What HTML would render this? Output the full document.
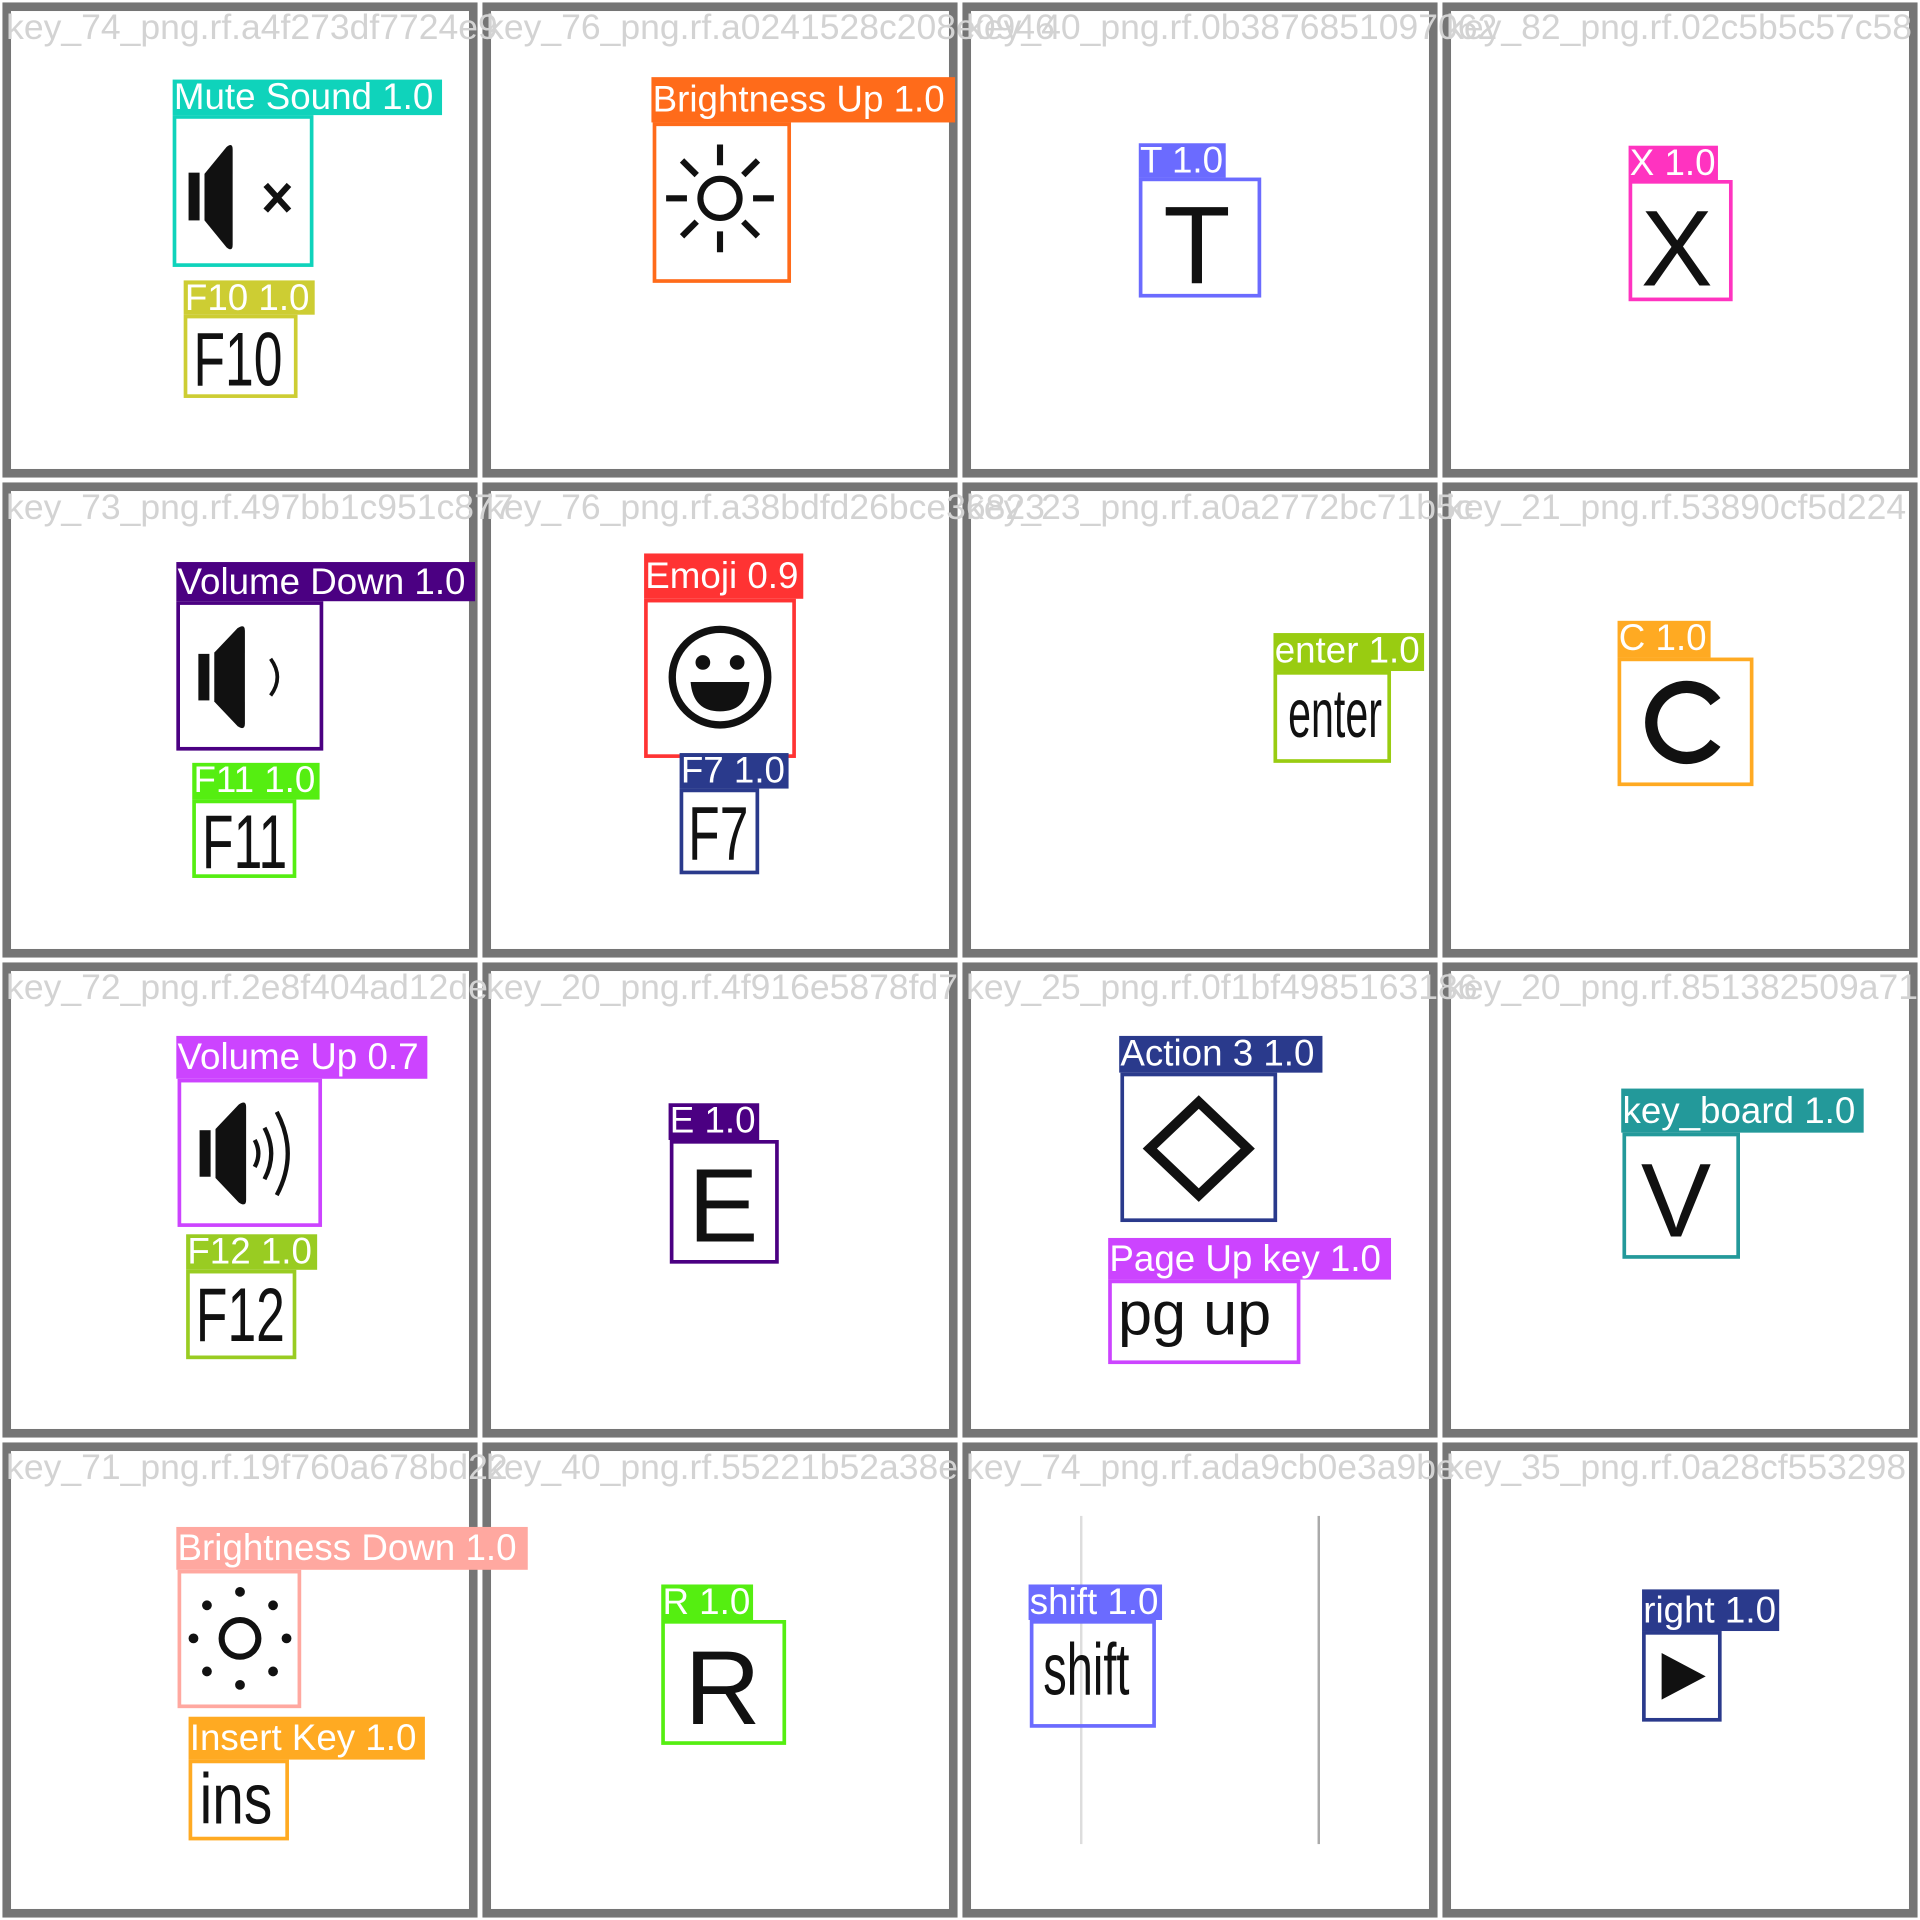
<!DOCTYPE html>
<html><head><meta charset="utf-8"><style>
html,body{margin:0;padding:0;background:#fff;width:1920px;height:1920px;overflow:hidden}
#w{position:absolute;left:0;top:0;width:1568px;height:1568px;transform:scale(1.22449);transform-origin:0 0;font-family:"Liberation Sans",sans-serif}
.c{position:absolute;width:374px;height:374px;border:7px solid #757575;box-sizing:content-box}
.fn{position:absolute;font-size:29px;color:#d3d3d3;white-space:nowrap;line-height:30px}
.l{position:absolute;color:#fff;font-size:30px;line-height:30px;white-space:nowrap;padding-left:1px;box-sizing:border-box;overflow:visible}
.b{position:absolute;box-sizing:border-box;border:3px solid}
.g{position:absolute;font-family:"Liberation Sans",sans-serif;color:#111}
svg{position:absolute;overflow:visible}
</style></head><body><div id="w">
<div class="c" style="left:2px;top:2px"></div><div class="c" style="left:394px;top:2px"></div><div class="c" style="left:786px;top:2px"></div><div class="c" style="left:1178px;top:2px"></div>
<div class="c" style="left:2px;top:394px"></div><div class="c" style="left:394px;top:394px"></div><div class="c" style="left:786px;top:394px"></div><div class="c" style="left:1178px;top:394px"></div>
<div class="c" style="left:2px;top:786px"></div><div class="c" style="left:394px;top:786px"></div><div class="c" style="left:786px;top:786px"></div><div class="c" style="left:1178px;top:786px"></div>
<div class="c" style="left:2px;top:1178px"></div><div class="c" style="left:394px;top:1178px"></div><div class="c" style="left:786px;top:1178px"></div><div class="c" style="left:1178px;top:1178px"></div>
<div class="fn" style="left:5px;top:8px">key_74_png.rf.a4f273df7724e9</div>
<div class="fn" style="left:397px;top:8px">key_76_png.rf.a0241528c208e0946</div>
<div class="fn" style="left:789px;top:8px">key_40_png.rf.0b3876851097062</div>
<div class="fn" style="left:1181px;top:8px">key_82_png.rf.02c5b5c57c58</div>
<div class="fn" style="left:5px;top:400px">key_73_png.rf.497bb1c951c877</div>
<div class="fn" style="left:397px;top:400px">key_76_png.rf.a38bdfd26bce36823</div>
<div class="fn" style="left:789px;top:400px">key_23_png.rf.a0a2772bc71b5c</div>
<div class="fn" style="left:1181px;top:400px">key_21_png.rf.53890cf5d224</div>
<div class="fn" style="left:5px;top:792px">key_72_png.rf.2e8f404ad12de</div>
<div class="fn" style="left:397px;top:792px">key_20_png.rf.4f916e5878fd7</div>
<div class="fn" style="left:789px;top:792px">key_25_png.rf.0f1bf4985163186</div>
<div class="fn" style="left:1181px;top:792px">key_20_png.rf.851382509a71</div>
<div class="fn" style="left:5px;top:1184px">key_71_png.rf.19f760a678bd22</div>
<div class="fn" style="left:397px;top:1184px">key_40_png.rf.55221b52a38e</div>
<div class="fn" style="left:789px;top:1184px">key_74_png.rf.ada9cb0e3a9be</div>
<div class="fn" style="left:1181px;top:1184px">key_35_png.rf.0a28cf553298</div>

<div class="l" style="left:141px;top:65px;width:220px;height:29px;background:#0fd3bb">Mute Sound 1.0</div>
<div class="b" style="left:141px;top:94px;width:115px;height:124px;border-color:#0fd3bb"></div>
<svg style="left:141px;top:94px" width="115" height="124"><rect x="13" y="47" width="9" height="39" fill="#111"/><path d="M26 48 L44 26 Q49 22 49 28 L49 106 Q49 112 44 108 L26 86 Z" fill="#111"/><path d="M76 57 L95 78 M95 57 L76 78" stroke="#111" stroke-width="5"/></svg>
<div class="l" style="left:150px;top:229px;width:107px;height:28px;background:#cdcd33">F10 1.0</div>
<div class="b" style="left:150px;top:257px;width:93px;height:68px;border-color:#cdcd33"></div>
<div class="g" style="left:158px;top:259px;font-size:62px;transform:scaleX(.68);transform-origin:0 0">F10</div>

<div class="l" style="left:532px;top:63px;width:248px;height:37px;background:#ff6b1a;line-height:37px">Brightness Up 1.0</div>
<div class="b" style="left:533px;top:100px;width:113px;height:131px;border-color:#ff6b1a"></div>
<svg style="left:533px;top:100px" width="113" height="131"><circle cx="55" cy="62" r="16" fill="none" stroke="#111" stroke-width="5"/><g stroke="#111" stroke-width="5"><path d="M55 18V35M55 89V106M11 62H28M82 62H99M24 31L36 43M74 81L86 93M86 31L74 43M36 81L24 93"/></g></svg>

<div class="l" style="left:930px;top:117px;width:71px;height:28px;background:#6b6bff">T 1.0</div>
<div class="b" style="left:930px;top:145px;width:100px;height:98px;border-color:#6b6bff"></div>
<div class="g" style="left:950px;top:150px;font-size:90px">T</div>

<div class="l" style="left:1330px;top:119px;width:73px;height:28px;background:#ff33c0">X 1.0</div>
<div class="b" style="left:1330px;top:147px;width:85px;height:99px;border-color:#ff33c0"></div>
<div class="g" style="left:1340px;top:152px;font-size:88px">X</div>

<div class="l" style="left:144px;top:459px;width:244px;height:32px;background:#4b0082;line-height:34px">Volume Down 1.0</div>
<div class="b" style="left:144px;top:491px;width:120px;height:122px;border-color:#4b0082"></div>
<svg style="left:144px;top:491px" width="120" height="122"><rect x="18" y="43" width="9" height="38" fill="#111"/><path d="M31 42 L50 22 Q56 18 56 24 L56 100 Q56 106 50 102 L31 82 Z" fill="#111"/><path d="M77 47 Q88 62 77 77" fill="none" stroke="#111" stroke-width="3"/></svg>
<div class="l" style="left:157px;top:623px;width:104px;height:30px;background:#55ee11">F11 1.0</div>
<div class="b" style="left:157px;top:653px;width:85px;height:64px;border-color:#55ee11"></div>
<div class="g" style="left:165px;top:653px;font-size:62px;transform:scaleX(.68);transform-origin:0 0">F11</div>

<div class="l" style="left:526px;top:452px;width:130px;height:37px;background:#ff3333;line-height:37px">Emoji 0.9</div>
<div class="b" style="left:526px;top:489px;width:124px;height:130px;border-color:#ff3333"></div>
<svg style="left:526px;top:489px" width="124" height="130"><circle cx="62" cy="64" r="39" fill="none" stroke="#111" stroke-width="6"/><circle cx="48" cy="52" r="6" fill="#111"/><circle cx="76" cy="52" r="6" fill="#111"/><path d="M38 68 H86 Q84 92 62 92 Q40 92 38 68Z" fill="#111"/></svg>
<div class="l" style="left:555px;top:615px;width:89px;height:29px;background:#2a3a8c">F7 1.0</div>
<div class="b" style="left:555px;top:644px;width:65px;height:70px;border-color:#2a3a8c"></div>
<div class="g" style="left:562px;top:646px;font-size:62px;transform:scaleX(.68);transform-origin:0 0">F7</div>

<div class="l" style="left:1040px;top:517px;width:123px;height:31px;background:#99cc11">enter 1.0</div>
<div class="b" style="left:1040px;top:548px;width:96px;height:75px;border-color:#99cc11"></div>
<div class="g" style="left:1052px;top:550px;font-size:56px;transform:scaleX(.6);transform-origin:0 0">enter</div>

<div class="l" style="left:1321px;top:507px;width:76px;height:30px;background:#ffaa22">C 1.0</div>
<div class="b" style="left:1321px;top:537px;width:111px;height:105px;border-color:#ffaa22"></div>
<svg style="left:1321px;top:537px" width="111" height="105"><path d="M80 36 A29 29 0 1 0 80 70" fill="none" stroke="#111" stroke-width="10"/></svg>

<div class="l" style="left:144px;top:846px;width:205px;height:35px;background:#cc44ff;line-height:36px">Volume Up 0.7</div>
<div class="b" style="left:145px;top:881px;width:118px;height:121px;border-color:#cc44ff"></div>
<svg style="left:145px;top:881px" width="118" height="121"><rect x="18" y="42" width="9" height="38" fill="#111"/><path d="M31 41 L50 21 Q56 17 56 23 L56 99 Q56 105 50 101 L31 81 Z" fill="#111"/><g fill="none" stroke="#111" stroke-width="3.5"><path d="M63 50 Q69 61 63 72"/><path d="M71 40 Q82 61 71 82"/><path d="M81 27 Q99 61 81 95"/></g></svg>
<div class="l" style="left:152px;top:1008px;width:107px;height:29px;background:#99cc22">F12 1.0</div>
<div class="b" style="left:152px;top:1037px;width:90px;height:73px;border-color:#99cc22"></div>
<div class="g" style="left:160px;top:1039px;font-size:62px;transform:scaleX(.68);transform-origin:0 0">F12</div>

<div class="l" style="left:546px;top:901px;width:74px;height:30px;background:#4b0082">E 1.0</div>
<div class="b" style="left:547px;top:931px;width:89px;height:101px;border-color:#4b0082"></div>
<div class="g" style="left:562px;top:936px;font-size:86px">E</div>

<div class="l" style="left:914px;top:846px;width:166px;height:30px;background:#2a3a8c">Action 3 1.0</div>
<div class="b" style="left:915px;top:876px;width:128px;height:122px;border-color:#2a3a8c"></div>
<svg style="left:915px;top:876px" width="128" height="122"><path d="M64 24 L104 62 L64 100 L24 62 Z" fill="none" stroke="#111" stroke-width="8"/></svg>
<div class="l" style="left:905px;top:1011px;width:231px;height:34px;background:#cc44ff;line-height:36px">Page Up key 1.0</div>
<div class="b" style="left:905px;top:1045px;width:157px;height:69px;border-color:#cc44ff"></div>
<div class="g" style="left:913px;top:1044px;font-size:50px">pg up</div>

<div class="l" style="left:1324px;top:889px;width:198px;height:36px;background:#23999a;line-height:37px">key_board 1.0</div>
<div class="b" style="left:1325px;top:925px;width:96px;height:103px;border-color:#23999a"></div>
<div class="g" style="left:1340px;top:932px;font-size:86px">V</div>

<div class="l" style="left:144px;top:1247px;width:287px;height:35px;background:#ffa8a0;line-height:36px">Brightness Down 1.0</div>
<div class="b" style="left:145px;top:1282px;width:101px;height:113px;border-color:#ffa8a0"></div>
<svg style="left:145px;top:1282px" width="101" height="113"><circle cx="51" cy="56" r="15" fill="none" stroke="#111" stroke-width="5"/><g fill="#111"><circle cx="51" cy="18" r="4"/><circle cx="51" cy="94" r="4"/><circle cx="13" cy="56" r="4"/><circle cx="89" cy="56" r="4"/><circle cx="24" cy="29" r="4"/><circle cx="78" cy="83" r="4"/><circle cx="78" cy="29" r="4"/><circle cx="24" cy="83" r="4"/></g></svg>
<div class="l" style="left:154px;top:1402px;width:193px;height:35px;background:#ffaa22;line-height:36px">Insert Key 1.0</div>
<div class="b" style="left:154px;top:1437px;width:82px;height:66px;border-color:#ffaa22"></div>
<div class="g" style="left:163px;top:1436px;font-size:58px;transform:scaleX(.8);transform-origin:0 0">ins</div>

<div class="l" style="left:540px;top:1294px;width:75px;height:29px;background:#55ee11">R 1.0</div>
<div class="b" style="left:540px;top:1323px;width:102px;height:102px;border-color:#55ee11"></div>
<div class="g" style="left:559px;top:1330px;font-size:86px">R</div>

<div style="position:absolute;left:882px;top:1238px;width:2px;height:268px;background:#ddd"></div>
<div style="position:absolute;left:1076px;top:1238px;width:2px;height:268px;background:#aaa"></div>
<div class="l" style="left:840px;top:1294px;width:109px;height:29px;background:#6b6bff">shift 1.0</div>
<div class="b" style="left:841px;top:1323px;width:103px;height:88px;border-color:#6b6bff"></div>
<div class="g" style="left:852px;top:1329px;font-size:60px;transform:scaleX(.64);transform-origin:0 0">shift</div>

<div class="l" style="left:1341px;top:1298px;width:112px;height:34px;background:#2a3a8c;line-height:36px">right 1.0</div>
<div class="b" style="left:1341px;top:1332px;width:65px;height:74px;border-color:#2a3a8c"></div>
<svg style="left:1341px;top:1332px" width="65" height="74"><path d="M16 18 L52 37 L16 56 Z" fill="#111"/></svg>
</div></body></html>
